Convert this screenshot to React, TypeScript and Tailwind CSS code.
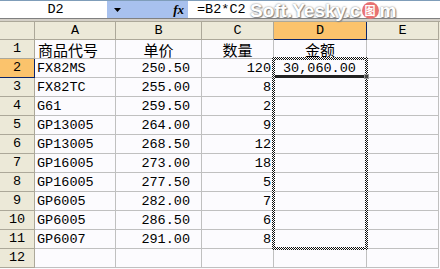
const rows = [
  ["FX82MS", "250.50", "120"],
  ["FX82TC", "255.00", "8"],
  ["G61", "259.50", "2"],
  ["GP13005", "264.00", "9"],
  ["GP13005", "268.50", "12"],
  ["GP16005", "273.00", "18"],
  ["GP16005", "277.50", "5"],
  ["GP6005", "282.00", "7"],
  ["GP6005", "286.50", "6"],
  ["GP6007", "291.00", "8"],
];

const cjk = "font-['Noto_Sans_CJK_SC',sans-serif] text-[15px]";
const ants =
  "absolute bg-[repeating-conic-gradient(#111_0%_25%,#fff_0%_50%)] bg-[length:2px_2px]";

const ColHead = ({ label, active }: { label: string; active?: boolean }) => (
  <div
    className={
      active
        ? "flex items-center justify-center bg-[#fbc36c] border-r border-b border-[#0a246a]"
        : "flex items-center justify-center bg-[#ece9d8] border-r border-b border-[#aca899]"
    }
  >
    {label}
  </div>
);

const RowHead = ({ n, active }: { n: number; active?: boolean }) => (
  <div
    className={
      active
        ? "flex items-center justify-center bg-[#fbc36c] border-r border-b border-[#0a246a]"
        : "flex items-center justify-center bg-[#ece9d8] border-r border-b border-[#aca899]"
    }
  >
    {n}
  </div>
);

const Cell = ({ children, className = "" }: { children?: React.ReactNode; className?: string }) => (
  <div className={"flex items-center border-r border-b border-[#c0c0c0] overflow-hidden whitespace-nowrap " + className}>
    {children}
  </div>
);

const grid = "grid grid-cols-[35px_81px_86px_72px_93px_72px_1px] h-[19px]";

export default function App() {
  return (
    <div className="relative w-[440px] h-[269px] overflow-hidden bg-[#fcfbfe] text-black font-['Liberation_Mono',monospace] text-[13.5px] leading-none">
      {/* formula bar */}
      <div className="flex h-[19px] border-t border-[#7f9db9] border-b border-b-[#808080]">
        <div className="w-[107px] bg-white flex items-center justify-center pl-[4px]">D2</div>
        <div className="w-[81px] bg-[#a8c1ee] flex items-center">
          <svg width="7" height="4" viewBox="0 0 7 4" className="ml-[7px]">
            <path d="M0 0h7L3.5 4z" fill="#000" />
          </svg>
          <span className="ml-auto mr-[4px] italic font-bold font-['Liberation_Serif',serif] text-[13px]">fx</span>
        </div>
        <div className="flex-1 bg-white flex items-center pl-[9px]">=B2*C2</div>
      </div>
      <div className="h-[2px] bg-[#d4d0c8]" />

      {/* column header */}
      <div className={grid + " border-t border-[#aca899] h-[19px]"}>
        <ColHead label="" />
        <ColHead label="A" />
        <ColHead label="B" />
        <ColHead label="C" />
        <ColHead label="D" active />
        <ColHead label="E" />
        <div className="bg-[#ece9d8]" />
      </div>

      {/* row 1 */}
      <div className={grid}>
        <RowHead n={1} />
        <Cell className="pl-[3px]">
          <span className={cjk}>商品代号</span>
        </Cell>
        <Cell className="justify-center">
          <span className={cjk}>单价</span>
        </Cell>
        <Cell className="justify-center">
          <span className={cjk}>数量</span>
        </Cell>
        <Cell className="justify-center">
          <span className={cjk}>金额</span>
        </Cell>
        <Cell />
      </div>

      {rows.map((r, i) => (
        <div key={i} className={grid}>
          <RowHead n={i + 2} active={i === 0} />
          <Cell className="pl-[2px] pt-[2px]">{r[0]}</Cell>
          <Cell className="justify-end pr-[11px] pt-[2px]">{r[1]}</Cell>
          <Cell className="justify-end pr-[2px] pt-[2px]">{r[2]}</Cell>
          <Cell className="pl-[9px] pt-[2px]">{i === 0 ? "30,060.00" : ""}</Cell>
          <Cell />
        </div>
      ))}

      <div className={grid}>
        <RowHead n={12} />
        <Cell />
        <Cell />
        <Cell />
        <Cell />
        <Cell />
      </div>

      {/* copy marquee D2:D11 */}
      <div className={ants + " left-[272px] top-[57px] w-[96px] h-[3px]"} />
      <div className={ants + " left-[272px] top-[247px] w-[96px] h-[3px]"} />
      <div className={ants + " left-[272px] top-[57px] w-[3px] h-[193px]"} />
      <div className={ants + " left-[365px] top-[57px] w-[3px] h-[193px]"} />

      {/* active cell bottom edge + fill handle */}
      <div className="absolute left-[275px] top-[75px] w-[89px] h-[3px] bg-[#222]" />
      <div className="absolute left-[364px] top-[74px] w-[5px] h-[5px] bg-[#444] border border-[#999]" />

      {/* watermark */}
      <div className="absolute left-[250px] top-[1px] flex items-center font-['Liberation_Sans',sans-serif] font-bold text-[19px] text-white [text-shadow:0_0_2px_#777,1px_1px_1px_#888] leading-none">
        Soft.Yesky.c
        <span className="mx-[1px] w-[17px] h-[17px] rounded-full bg-[#e87272] flex items-center justify-center text-[11px] text-white font-['Noto_Sans_CJK_SC',sans-serif] [text-shadow:none]">
          图
        </span>
        m
      </div>
    </div>
  );
}
